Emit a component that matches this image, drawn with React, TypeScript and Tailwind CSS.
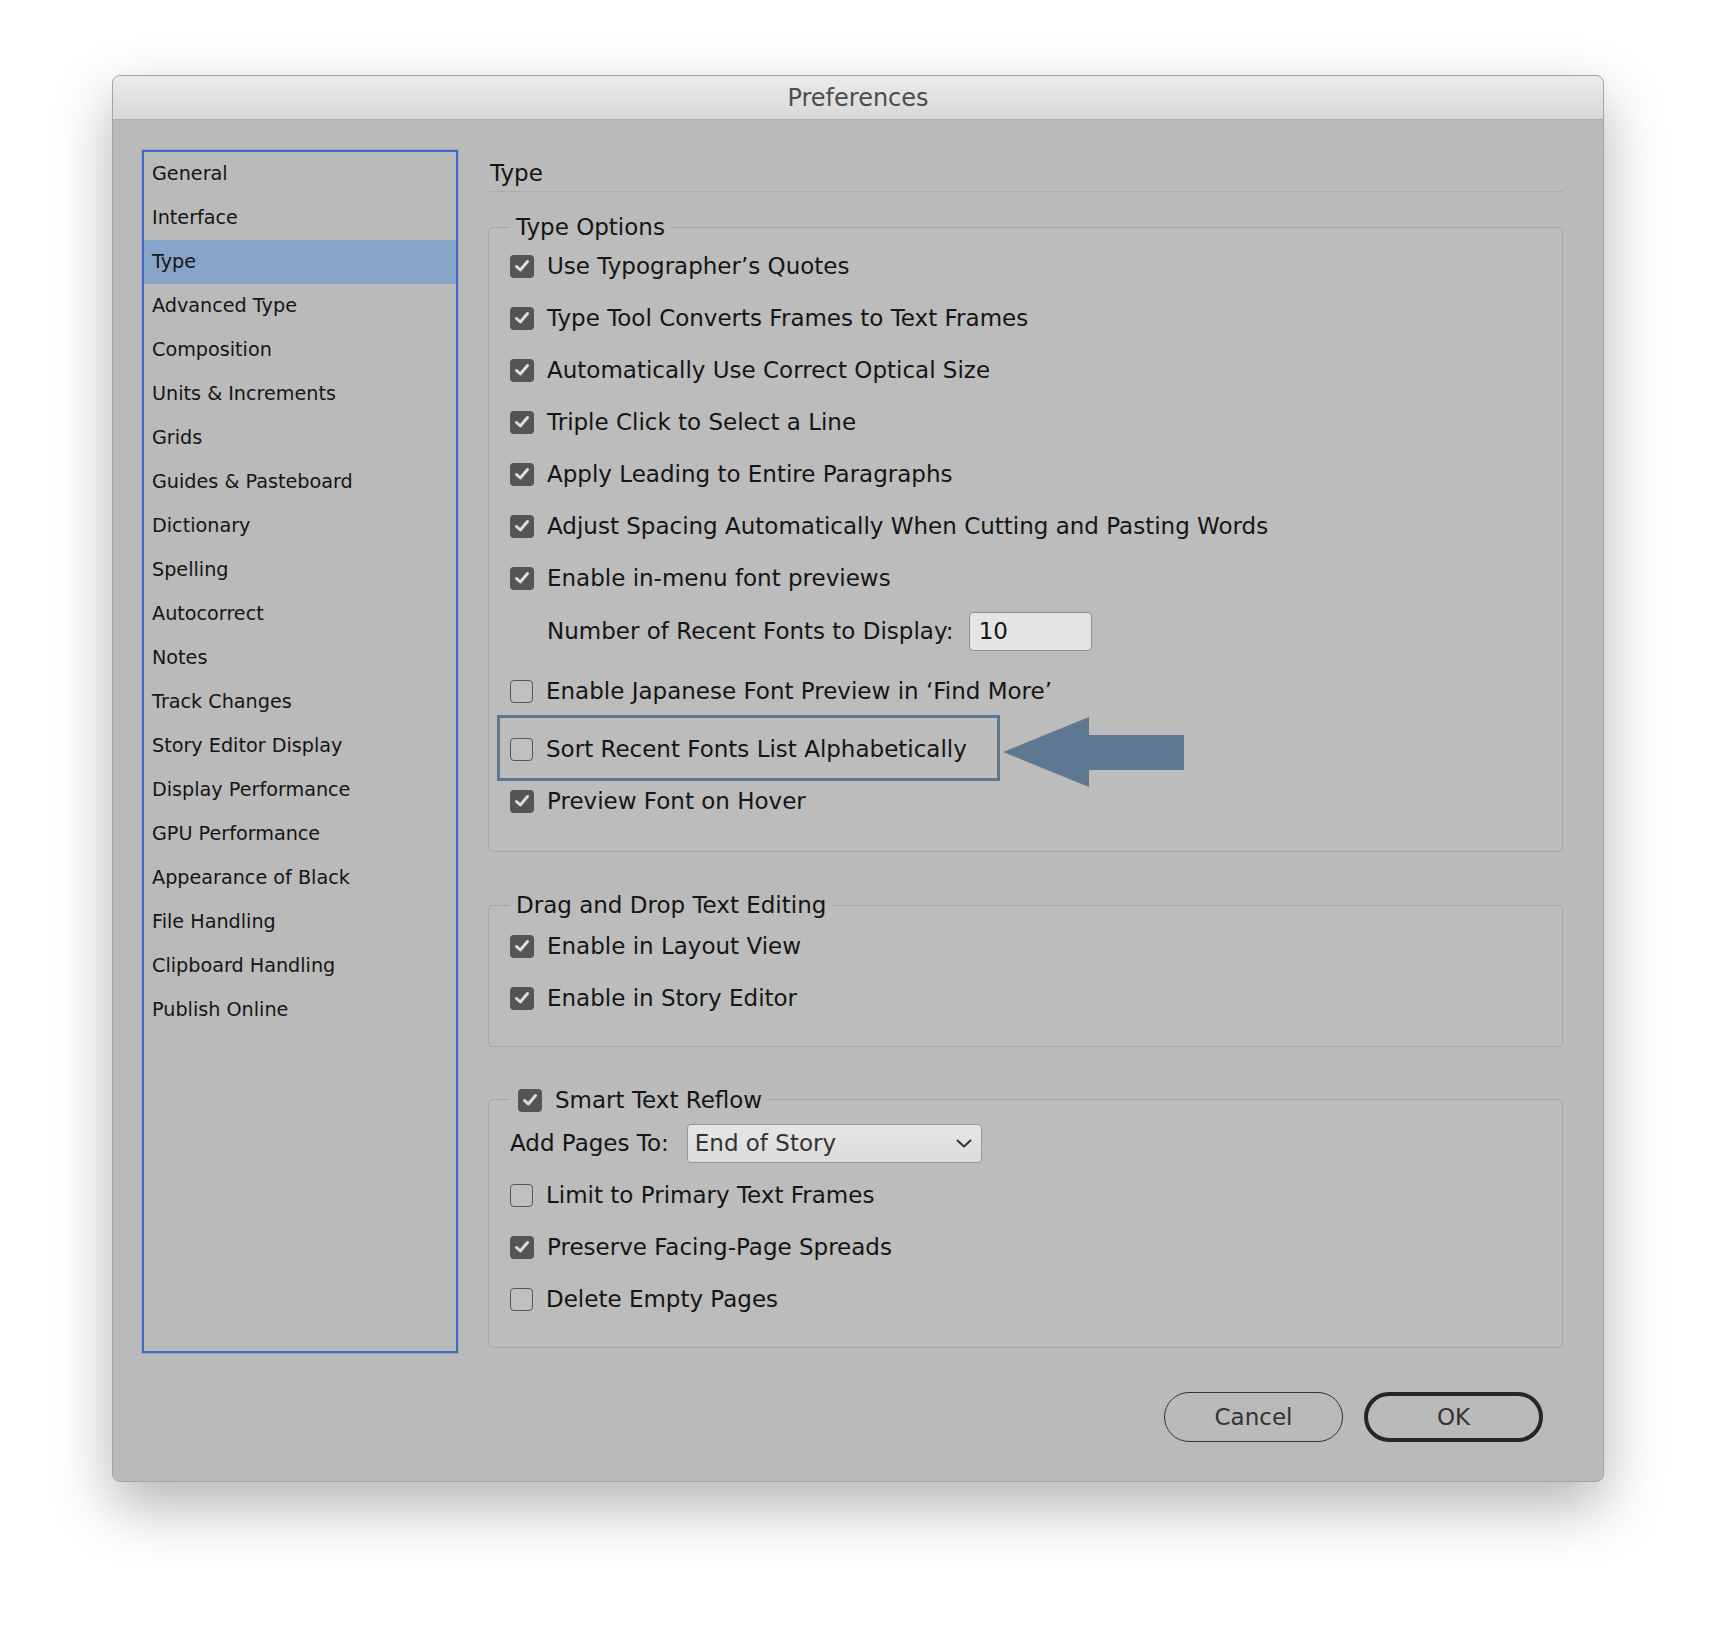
import type { ReactNode } from 'react'

const sidebarItems = [
  'General',
  'Interface',
  'Type',
  'Advanced Type',
  'Composition',
  'Units & Increments',
  'Grids',
  'Guides & Pasteboard',
  'Dictionary',
  'Spelling',
  'Autocorrect',
  'Notes',
  'Track Changes',
  'Story Editor Display',
  'Display Performance',
  'GPU Performance',
  'Appearance of Black',
  'File Handling',
  'Clipboard Handling',
  'Publish Online',
]

function CheckBox({ checked }: { checked?: boolean }) {
  if (!checked) {
    return <span className="h-[23px] w-[23px] shrink-0 rounded-[4px] border-[1.5px] border-[#555] bg-[#bfbfbf]" />
  }
  return (
    <span className="flex h-[23px] w-[24px] shrink-0 items-center justify-center rounded-[4px] bg-[#555]">
      <svg width="16" height="14" viewBox="0 0 16 14" fill="none">
        <path d="M2.5 7.5 L6.3 11 L13.5 2.5" stroke="#dcdcdc" strokeWidth="3" strokeLinecap="round" strokeLinejoin="round" />
      </svg>
    </span>
  )
}

function Option({ label, checked }: { label: string; checked?: boolean }) {
  return (
    <div className="flex h-[52px] items-center gap-[13px]">
      <CheckBox checked={checked} />
      <span>{label}</span>
    </div>
  )
}

function Group({ legend, children, className }: { legend: ReactNode; children: ReactNode; className?: string }) {
  return (
    <fieldset className={`rounded-[5px] border border-[#a6a6a6] bg-[#bcbcbc] px-[21px] ${className ?? ''}`}>
      <legend className="px-[6px] leading-[26px]">{legend}</legend>
      {children}
    </fieldset>
  )
}

export default function App() {
  return (
    <div className="min-h-[1630px] bg-white pl-[112px] pt-[75px] font-['DejaVu_Sans',sans-serif] text-[#151515]">
      <div className="flex h-[1407px] w-[1492px] flex-col overflow-hidden rounded-[8px] border border-[#a3a3a3] bg-[#bababa] shadow-[0_24px_60px_rgba(0,0,0,0.3)]">
        {/* title bar */}
        <div className="flex h-[44px] shrink-0 items-center justify-center border-b border-[#ababab] bg-gradient-to-b from-[#ececec] to-[#d7d7d7] text-[24px] text-[#4d4d4d]">
          Preferences
        </div>

        <div className="flex pl-[29px] pt-[30px]">
          {/* sidebar */}
          <div className="h-[1203px] w-[316px] shrink-0 border-2 border-[#3a6bcb] text-[19.2px] shadow-[0_0_0_1px_#a8a8a8]">
            {sidebarItems.map((item) => (
              <div
                key={item}
                className={`flex h-[44px] items-center pl-[8px] ${item === 'Type' ? 'bg-[#87a5c8]' : ''}`}
              >
                {item}
              </div>
            ))}
          </div>

          {/* main */}
          <div className="ml-[30px] w-[1075px] text-[23px]">
            <div className="h-[42px] border-b border-[#acacac] pl-[2px] pt-[8px] leading-[30px]">Type</div>

            <Group legend="Type Options" className="mt-[22px] pb-[30px]">
              <Option label="Use Typographer’s Quotes" checked />
              <Option label="Type Tool Converts Frames to Text Frames" checked />
              <Option label="Automatically Use Correct Optical Size" checked />
              <Option label="Triple Click to Select a Line" checked />
              <Option label="Apply Leading to Entire Paragraphs" checked />
              <Option label="Adjust Spacing Automatically When Cutting and Pasting Words" checked />
              <Option label="Enable in-menu font previews" checked />
              <div className="flex h-[54px] items-center gap-[15px] pl-[37px]">
                <span>Number of Recent Fonts to Display:</span>
                <div className="flex h-[39px] w-[123px] items-center rounded-[4px] border-[1.5px] border-[#8e8e8e] bg-[#e4e4e4] pl-[9px]">
                  10
                </div>
              </div>
              <div className="mt-[9px] flex h-[48px] items-center gap-[13px]">
                <CheckBox />
                <span>Enable Japanese Font Preview in ‘Find More’</span>
              </div>
              <div className="flex h-[66px] items-start">
                <div className="ml-[-13px] flex h-[66px] w-[503px] shrink-0 items-center gap-[13px] border-[3px] border-[#5f7891] pl-[10px] pt-[2px]">
                  <CheckBox />
                  <span>Sort Recent Fonts List Alphabetically</span>
                </div>
                <svg className="ml-[3px] mt-[2px] shrink-0" width="181" height="70" viewBox="0 0 181 70">
                  <path d="M0 35 L86 0 L86 18 L181 18 L181 53 L86 53 L86 70 Z" fill="#5f7891" />
                </svg>
              </div>
              <div className="flex h-[40px] items-center gap-[13px]">
                <CheckBox checked />
                <span>Preview Font on Hover</span>
              </div>
            </Group>

            <Group legend="Drag and Drop Text Editing" className="mt-[40px] pb-[22px] pt-[2px]">
              <Option label="Enable in Layout View" checked />
              <Option label="Enable in Story Editor" checked />
            </Group>

            <Group
              legend={
                <span className="inline-flex items-center gap-[13px] pl-[2px]">
                  <CheckBox checked />
                  <span>Smart Text Reflow</span>
                </span>
              }
              className="mt-[39px] pb-[22px] pt-[4px]"
            >
              <div className="flex h-[52px] items-center gap-[18px]">
                <span>Add Pages To:</span>
                <div className="flex h-[39px] w-[295px] items-center justify-between rounded-[4px] border-[1.5px] border-[#989898] bg-gradient-to-b from-[#e6e6e6] to-[#dcdcdc] pl-[7px] pr-[9px] text-[#333]">
                  <span>End of Story</span>
                  <svg width="16" height="9" viewBox="0 0 16 9" fill="none">
                    <path d="M1.5 1.5 L8 7.5 L14.5 1.5" stroke="#333" strokeWidth="2" strokeLinecap="round" strokeLinejoin="round" />
                  </svg>
                </div>
              </div>
              <Option label="Limit to Primary Text Frames" />
              <Option label="Preserve Facing-Page Spreads" checked />
              <Option label="Delete Empty Pages" />
            </Group>

            <div className="mt-[44px] flex justify-end gap-[21px] pr-[20px] text-[#333]">
              <button className="flex h-[50px] w-[179px] items-center justify-center rounded-full border-[1.5px] border-[#333]">
                Cancel
              </button>
              <button className="flex h-[50px] w-[179px] items-center justify-center rounded-full border-[4px] border-[#262626]">
                OK
              </button>
            </div>
          </div>
        </div>
      </div>
    </div>
  )
}
